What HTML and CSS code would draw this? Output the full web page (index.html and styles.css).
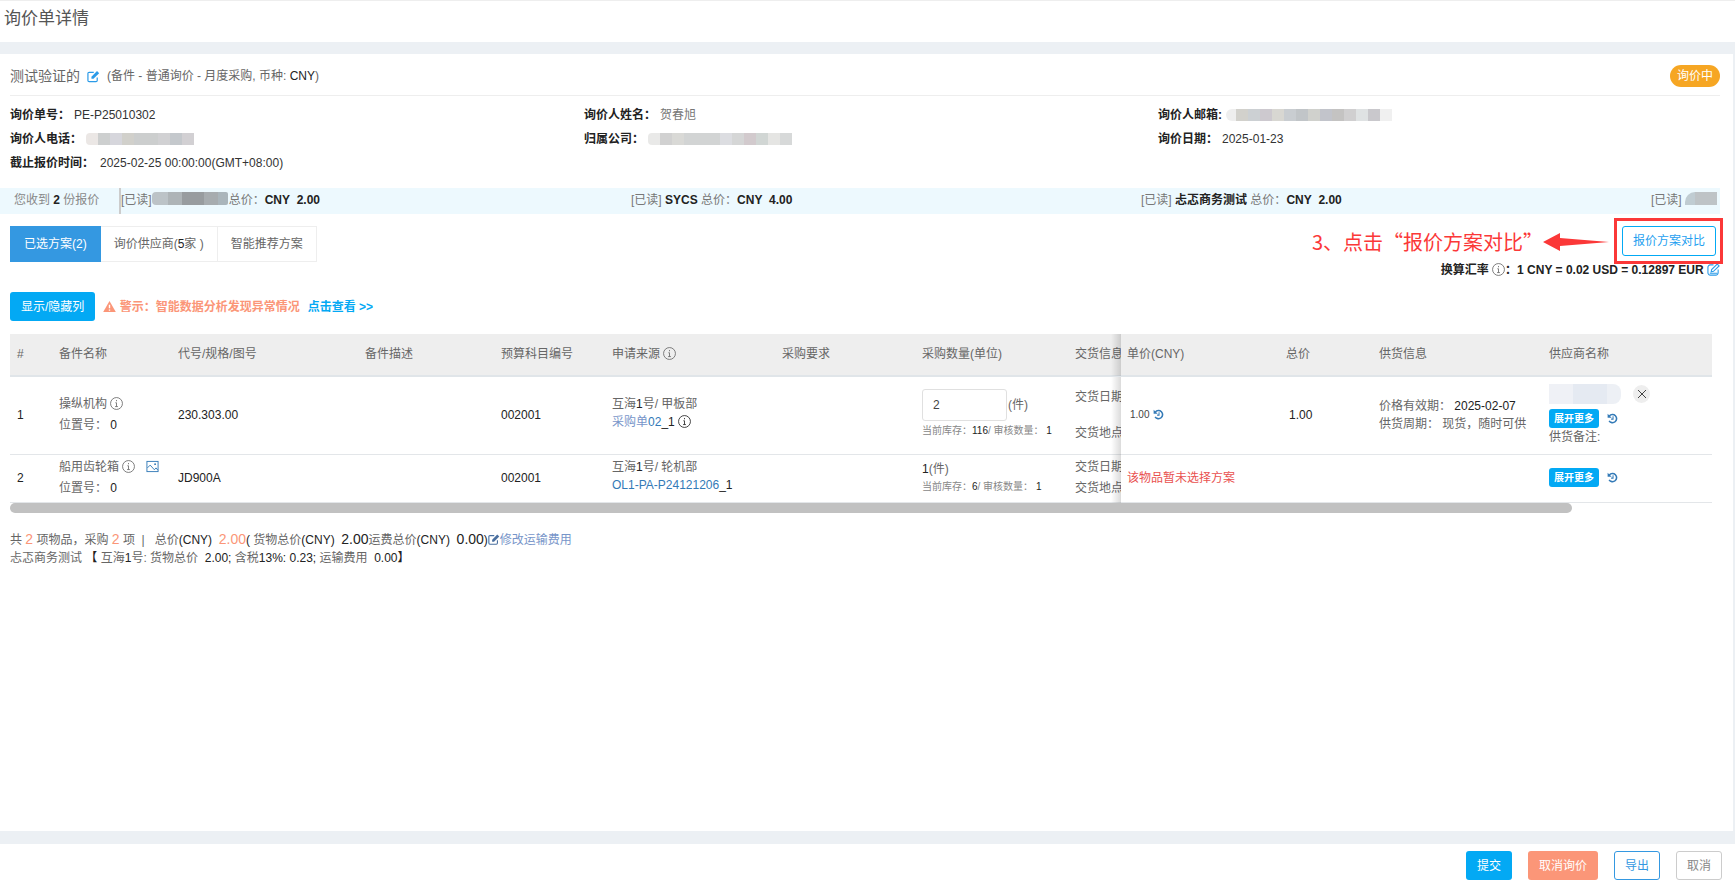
FILE: index.html
```html
<!DOCTYPE html>
<html lang="zh-CN">
<head>
<meta charset="utf-8">
<title>询价单详情</title>
<link rel="stylesheet" href="styles.css">
</head>
<body>
<svg class="defs" aria-hidden="true">
  <symbol id="edit" viewBox="0 0 14 14"><path d="M11 8v3.200a1.300 1.300 0 0 1-1.300 1.300H2.300A1.300 1.300 0 0 1 1 11.200V3.800a1.300 1.300 0 0 1 1.300-1.300h5" fill="none" stroke="currentColor" stroke-width="1.300"/><path d="M4.800 9.500V7.300L10.800 1.200 13.100 3.500 7 9.500z" fill="currentColor"/></symbol>
  <symbol id="info" viewBox="0 0 14 14"><circle cx="7" cy="7" r="6.400" fill="none" stroke="currentColor" stroke-width=".9"/><path d="M7 3.200v1.400M5.800 6.200H7v4M5.500 10.300h3" fill="none" stroke="currentColor" stroke-width=".9"/></symbol>
  <symbol id="history" viewBox="0 0 14 14"><path d="M3 3.800a5.200 5.200 0 1 1-.3 6.200" fill="none" stroke="currentColor" stroke-width="2"/><path d="M.8 1v5.200H6z" fill="currentColor"/><path d="M7.700 4v3.800H5.200" fill="none" stroke="currentColor" stroke-width="1.300"/></symbol>
  <symbol id="picture" viewBox="0 0 14 14"><rect x="1" y="1.500" width="12" height="11" fill="none" stroke="currentColor"/><path d="M1.500 8.500l3-3 4.500 5 1.800-2 2 2.500" fill="none" stroke="currentColor"/><circle cx="9.800" cy="4.500" r="1" fill="currentColor"/></symbol>
  <symbol id="warn" viewBox="0 0 14 14"><path d="M7 1l6.800 12H.2z" fill="currentColor"/><path d="M7 5v4M7 10.200v1.500" stroke="#fff" stroke-width="1.500"/></symbol>
</svg>

<header class="page-head"><h1>询价单详情</h1></header>

<main class="content">
  <div class="title-row">
    <h2>测试验证的</h2>
    <svg class="icon blue"><use href="#edit"/></svg>
    <span>(备件 - 普通询价 - 月度采购, 币种: <span class="dark">CNY</span>)</span>
    <span class="status">询价中</span>
  </div>

  <dl class="info">
    <div><dt>询价单号：</dt><dd>PE-P25010302</dd></div>
    <div><dt>询价人姓名：</dt><dd class="soft">贺春旭</dd></div>
    <div><dt>询价人邮箱:</dt><dd><span class="mask mask-mail"></span></dd></div>
    <div><dt>询价人电话：</dt><dd><span class="mask mask-phone"></span></dd></div>
    <div><dt>归属公司：</dt><dd><span class="mask mask-company"></span></dd></div>
    <div><dt>询价日期：</dt><dd>2025-01-23</dd></div>
    <div><dt>截止报价时间：</dt><dd class="deadline">2025-02-25 00:00:00(GMT+08:00)</dd></div>
  </dl>

  <div class="quotes">
    <div class="quotes-count">您收到 <b>2</b> 份报价</div>
    <ul class="quotes-list">
      <li>[已读]<span class="mask mask-quote"></span>总价：<b>CNY&nbsp; 2.00</b></li>
      <li>[已读] <b>SYCS</b> 总价：<b>CNY&nbsp; 4.00</b></li>
      <li>[已读] <b>忐忑商务测试</b> 总价：<b>CNY&nbsp; 2.00</b></li>
      <li>[已读] <span class="mask mask-last"></span></li>
    </ul>
  </div>

  <div class="toolbar">
    <div class="tabs">
      <button class="tab active">已选方案(2)</button>
      <button class="tab">询价供应商(<span class="dark">5</span>家 )</button>
      <button class="tab">智能推荐方案</button>
    </div>
    <div class="compare">
      <div class="compare-row">
        <span class="note">3、点击“报价方案对比”</span>
        <svg class="arrow" viewBox="0 0 66 18"><path d="M0 9L17 0V5L66 9 17 13V18z" fill="#fb3838"/></svg>
        <div class="highlight"><button class="btn outline">报价方案对比</button></div>
      </div>
      <div class="rate">换算汇率 <svg class="icon thin"><use href="#info"/></svg>：1 CNY = 0.02 USD = 0.12897 EUR <svg class="icon blue" viewBox="0 0 14 14"><path d="M7 2H3.500A2.500 2.500 0 0 0 1 4.500v6A2.500 2.500 0 0 0 3.500 13h6a2.500 2.500 0 0 0 2.500-2.500V7M4.500 9.500l.5-2.500L11 1.200l2 2L7 9z M3 11h8" fill="none" stroke="currentColor" stroke-width="1.200"/></svg></div>
    </div>
  </div>

  <div class="actions">
    <button class="btn primary">显示/隐藏列</button>
    <p class="warning"><svg class="icon"><use href="#warn"/></svg> 警示：智能数据分析发现异常情况</p>
    <a class="more" href="#">点击查看 &gt;&gt;</a>
  </div>

  <div class="table-wrap">
    <table>
      <colgroup>
        <col class="c-no"><col class="c-name"><col class="c-code"><col class="c-desc"><col class="c-budget"><col class="c-source"><col class="c-req"><col class="c-qty"><col class="c-delivery"><col class="c-price"><col class="c-total"><col class="c-supply"><col class="c-vendor">
      </colgroup>
      <thead>
        <tr><th>#</th><th>备件名称</th><th>代号/规格/图号</th><th>备件描述</th><th>预算科目编号</th><th>申请来源 <svg class="icon"><use href="#info"/></svg></th><th>采购要求</th><th>采购数量(单位)</th><th class="clip">交货信息</th><th class="pinned">单价(CNY)</th><th>总价</th><th>供货信息</th><th>供应商名称</th></tr>
      </thead>
      <tbody>
        <tr class="tall">
          <td class="dark">1</td>
          <td class="loose">操纵机构 <svg class="icon"><use href="#info"/></svg><br>位置号： <span class="dark">0</span></td>
          <td class="dark">230.303.00</td>
          <td></td>
          <td class="dark">002001</td>
          <td class="source">互海<span class="dark">1</span>号/ 甲板部<br><a class="pale" href="#">采购单<span class="link">02</span></a><span class="dark">_1</span> <svg class="icon dark"><use href="#info"/></svg></td>
          <td></td>
          <td><label class="qty"><input type="text" value="2">(件)</label><div class="stock">当前库存：<span class="dark">116</span>/ 审核数量：<span class="dark"> 1</span></div></td>
          <td class="clip spread">交货日期<br>交货地点</td>
          <td class="pinned"><span class="small">1.00</span> <svg class="icon link small-icon"><use href="#history"/></svg></td>
          <td class="dark total">1.00</td>
          <td>价格有效期： <span class="dark">2025-02-07</span><br>供货周期： 现货，随时可供</td>
          <td class="vendor">
            <div class="line"><span class="mask mask-vendor"></span><button class="close" aria-label="移除"><svg viewBox="0 0 10 10"><path d="M1 1l8 8M9 1L1 9" stroke="currentColor" fill="none"/></svg></button></div>
            <div class="line"><button class="btn mini">展开更多</button><svg class="icon link small-icon"><use href="#history"/></svg></div>
            <div>供货备注:</div>
          </td>
        </tr>
        <tr class="short">
          <td class="dark">2</td>
          <td class="loose">船用齿轮箱 <svg class="icon"><use href="#info"/></svg> <svg class="icon link pic"><use href="#picture"/></svg><br>位置号： <span class="dark">0</span></td>
          <td class="dark">JD900A</td>
          <td></td>
          <td class="dark">002001</td>
          <td class="source">互海<span class="dark">1</span>号/ 轮机部<br><a class="link" href="#">OL1-PA-P24121206</a><span class="dark">_1</span></td>
          <td></td>
          <td><span class="dark">1</span>(件)<div class="stock">当前库存：<span class="dark">6</span>/ 审核数量：<span class="dark"> 1</span></div></td>
          <td class="clip loose">交货日期<br>交货地点</td>
          <td class="pinned red">该物品暂未选择方案</td>
          <td></td>
          <td></td>
          <td class="vendor"><div class="line"><button class="btn mini">展开更多</button><svg class="icon link small-icon"><use href="#history"/></svg></div></td>
        </tr>
      </tbody>
    </table>
    <div class="scroll"><div class="thumb"></div></div>
  </div>

  <div class="summary">
    <p>共 <span class="num coral">2</span> 项物品，采购 <span class="num coral">2</span> 项&nbsp; |&nbsp;&nbsp; 总价<span class="dark">(CNY)</span>&nbsp; <span class="num coral">2.00</span><span class="dark">(</span> 货物总价<span class="dark">(CNY)</span>&nbsp; <span class="num">2.00</span>运费总价<span class="dark">(CNY)</span>&nbsp; <span class="num">0.00</span><span class="dark">)</span><a class="pale" href="#"><svg class="icon dark-link"><use href="#edit"/></svg>修改运输费用</a></p>
    <p>忐忑商务测试 <span class="dark">【</span> 互海<span class="dark">1</span>号: 货物总价&nbsp; <span class="dark">2.00;</span> 含税<span class="dark">13%: 0.23;</span> 运输费用&nbsp; <span class="dark">0.00】</span></p>
  </div>
</main>

<footer class="page-foot">
  <button class="btn primary">提交</button>
  <button class="btn danger">取消询价</button>
  <button class="btn outline export">导出</button>
  <button class="btn plain">取消</button>
</footer>
</body>
</html>
```

FILE: styles.css
```css
* { box-sizing: border-box; }

body {
  margin: 0;
  min-height: 100vh;
  display: flex;
  flex-direction: column;
  background: #ecf0f4;
  color: #666;
  font: 12px/18px "Liberation Sans", "Noto Sans CJK SC", sans-serif;
}

h1, h2, p, dl, dd, ul { margin: 0; padding: 0; }
button, input { font: inherit; color: inherit; }
button { cursor: pointer; }
a { text-decoration: none; }
b { color: #222; }

.defs { position: absolute; width: 0; height: 0; }
.icon { width: 13px; height: 13px; vertical-align: -2px; flex: none; }
.small-icon { width: 11px; height: 11px; }
.thin { color: #666; }
.blue { color: #2b9be8; }
.dark { color: #222; }
.link { color: #337ab7; }
.pale { color: #7795c9; }
.coral { color: #fb9678; }
.red { color: #e9514f; }
.small { font-size: 10px; }

.page-head {
  height: 42px;
  padding: 5px 4px;
  border-top: 1px solid #eee;
  background: #fff;
}
.page-head h1 { font-size: 17px; line-height: 26px; font-weight: 400; color: #555; }

.content {
  flex: 1;
  margin: 12px 2px 13px 0;
  padding: 0 13px 0 10px;
  background: #fff;
}

.title-row {
  display: flex;
  align-items: center;
  gap: 7px;
  height: 42px;
  padding-top: 3px;
  border-bottom: 1px solid #eee;
}
.title-row h2 { font-size: 14px; font-weight: 400; }
.status {
  margin-left: auto;
  padding: 2px 7px;
  border-radius: 11px;
  background: #f6a623;
  color: #fff;
}

.info {
  display: grid;
  grid-template-columns: repeat(3, 1fr);
  margin-right: -12px;
  padding: 7px 0 13px;
  line-height: 24px;
}
.info > div { display: flex; align-items: center; }
.info dt { font-weight: 700; color: #222; }
.info dd { display: flex; margin-left: 4px; color: #333; }
.info .deadline { margin-left: 6px; }
.info .soft { color: #777; }

.mask { display: inline-block; height: 12px; vertical-align: middle; }
.mask-phone { width: 108px; border-radius: 4px 0 0 4px; background: linear-gradient(90deg, #ebe7e5 12px, #cdcfcf 12px 24px, #d6d6dc 24px 36px, #d1d0cb 36px 48px, #cccece 48px 72px, #d1d1d3 72px 84px, #c4c8cc 84px 96px, #d2d0d3 96px); }
.mask-company { width: 144px; border-radius: 4px 0 0 4px; background: linear-gradient(90deg, #e9e9e8 12px, #d1d1d1 12px 24px, #d9d9d6 24px 36px, #d2d4d4 36px 72px, #dcdde1 72px 84px, #d5d6d6 84px 96px, #d2cacd 96px 108px, #d1d6d4 108px 120px, #e5e5e3 120px 132px, #d7d9d9 132px); }
.mask-mail { width: 166px; border-radius: 6px 0 0 6px; background: linear-gradient(90deg, #eee 10px, #d2d1cc 10px 22px, #ccd0d3 22px 34px, #cdc9cf 34px 46px, #d8d7d2 46px 58px, #c9cdd1 58px 70px, #c1c5c8 70px 82px, #d0d1cd 82px 94px, #c2c4cb 94px 106px, #c4c3c2 106px 118px, #d0cfd0 118px 130px, #dfe2e3 130px 142px, #c9c8cc 142px 154px, #f0f0f0 154px); }
.mask-quote { width: 76px; height: 13px; margin: -4px 1px 0 0; border-radius: 4px 2px 2px 4px; background: linear-gradient(90deg, #bcc3c7 16px, #aeb4b7 16px 30px, #989c9f 30px 52px, #a7acaf 52px 66px, #aab5bb 66px); }
.mask-last { width: 32px; height: 13px; margin-top: -4px; border-radius: 10px 0 0 0; background: linear-gradient(90deg, #c0ccd2 10px, #bec3c6 10px); }
.mask-vendor { width: 72px; height: 20px; border-radius: 0 8px 8px 0; background: linear-gradient(90deg, #eff1f6 24px, #e5eaf2 24px 58px, #edf0f5 58px); }

.quotes {
  display: flex;
  margin-left: -10px;
  padding: 0 0 2px 14px;
  background: #edf9fe;
  line-height: 24px;
}
.quotes-count { width: 105px; flex: none; color: #888; }
.quotes-list {
  flex: 1;
  display: flex;
  margin-bottom: -2px;
  overflow: hidden;
  list-style: none;
  border-left: 2px solid #ccc;
}
.quotes-list li { flex: 0 0 510px; white-space: nowrap; color: #777; }

.toolbar { display: flex; align-items: flex-start; justify-content: space-between; padding-top: 12px; }
.tabs { display: flex; }
.tab {
  height: 36px;
  padding: 0 13px;
  border: 1px solid #eee;
  border-left: 0;
  background: #fff;
}
.tab.active { padding: 0 14px; border: 0; background: #3498e1; color: #fff; }

.compare-row { display: flex; align-items: center; justify-content: flex-end; padding-right: 4px; }
.note { padding-top: 1px; font: 20px/29px "Noto Sans CJK SC", sans-serif; color: #fb3838; }
.arrow { width: 66px; height: 18px; margin: 2px 13px 0 0; }
.highlight { position: relative; }
.highlight::after {
  content: "";
  position: absolute;
  inset: -8px -7px -8px -8px;
  border: 3px solid #fb3838;
  pointer-events: none;
}
.rate { padding-top: 5px; text-align: right; font-weight: 700; color: #222; }

.btn {
  height: 29px;
  padding: 0 10px;
  border: 1px solid transparent;
  border-radius: 3px;
  color: #fff;
}
.primary { background: #03a9f4; }
.danger { background: #fb9678; }
.outline { height: 30px; border-color: #03a9f4; background: #fff; color: #1f9ff0; }
.export { height: 29px; border-color: #3498e1; color: #3498e1; }
.plain { border-color: #ccc; background: #fff; color: #888; }
.mini { height: 19px; padding: 0 5px; border: 0; background: #03a9f4; font-size: 10px; line-height: 19px; font-weight: 700; }

.actions { display: flex; align-items: center; gap: 8px; padding: 13px 0; font-weight: 700; }
.actions .btn { font-weight: 400; }
.warning { color: #fb9678; }
.more { color: #03a9f4; }

.table-wrap { margin-right: 8px; }
table { width: 100%; table-layout: fixed; border-collapse: separate; border-spacing: 0; }
th, td { padding: 0 7px; text-align: left; vertical-align: middle; }
th { height: 43px; padding-bottom: 2px; border-bottom: 2px solid #e0e5e9; background: #eee; font-weight: 400; white-space: nowrap; }
td { padding-bottom: 2px; border-bottom: 1px solid #e3e6e9; }
.tall td { height: 78px; }
.short td { height: 48px; }
td.source { padding-bottom: 6px; }
.c-no { width: 42px; }
.c-name { width: 119px; }
.c-code { width: 187px; }
.c-desc { width: 136px; }
.c-budget { width: 111px; }
.c-source { width: 170px; }
.c-req { width: 140px; }
.c-qty { width: 153px; }
.c-delivery { width: 53px; }
.c-price { width: 158px; }
.c-total { width: 93px; }
.c-supply { width: 170px; }
.c-vendor { width: 170px; }

.clip { padding-right: 0; overflow: hidden; white-space: nowrap; }
.loose { line-height: 21px; }
.spread { line-height: 36px; }
.pinned { position: relative; padding-left: 6px; }
.pinned::before {
  content: "";
  position: absolute;
  top: 0;
  bottom: -1px;
  right: 100%;
  width: 10px;
  background: linear-gradient(90deg, transparent, rgba(0, 0, 0, .14));
}
.pinned .small { padding-left: 3px; color: #444; }
.total { padding-left: 10px; }
.pic { margin-left: 7px; }

.qty { display: flex; align-items: center; gap: 1px; }
.qty input { width: 85px; height: 32px; padding: 0 10px; border: 1px solid #e0e0e0; border-radius: 3px; background: #fff; color: #444; }
.stock { font-size: 10px; line-height: 20px; color: #888; white-space: nowrap; }
.short .stock { line-height: 18px; }

.vendor .line { display: flex; align-items: center; gap: 8px; }
.vendor .line + .line { margin-top: 5px; }
.close {
  display: flex;
  align-items: center;
  justify-content: center;
  width: 17px;
  height: 18px;
  margin-left: 4px;
  padding: 0;
  border: 0;
  border-radius: 50%;
  background: #eee;
  color: #444;
}
.close svg { width: 10px; height: 10px; }

.thumb { width: 1562px; max-width: 92%; height: 10px; border-radius: 5px; background: #c1c1c1; }

.summary { padding-top: 17px; }
.summary .num { font-size: 14px; }
.summary .num:not(.coral) { color: #222; }
.dark-link { color: #4a6f9f; width: 12px; }

.page-foot {
  display: flex;
  justify-content: flex-end;
  gap: 16px;
  height: 40px;
  padding: 7px 13px 0;
  background: #fff;
}
```
